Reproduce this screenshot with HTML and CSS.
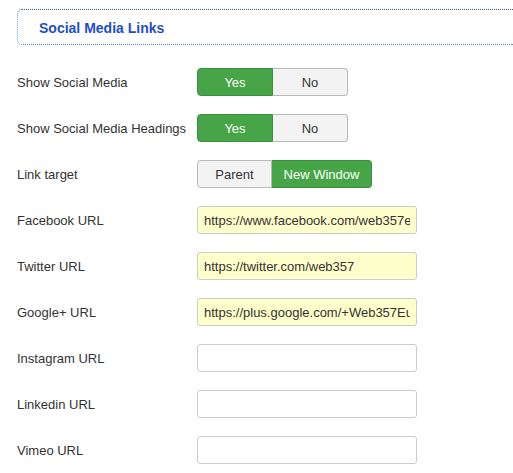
FILE: index.html
```html
<!DOCTYPE html>
<html>
<head>
<meta charset="utf-8">
<link rel="stylesheet" href="styles.css">
</head>
<body>
<div class="page">
  <div class="section-head"><span class="section-title">Social Media Links</span></div>
  <div class="form">
    <div class="row">
      <label class="label">Show Social Media</label>
      <div class="btn-group">
        <span class="btn btn-on">Yes</span><span class="btn">No</span>
      </div>
    </div>
    <div class="row">
      <label class="label">Show Social Media Headings</label>
      <div class="btn-group">
        <span class="btn btn-on">Yes</span><span class="btn">No</span>
      </div>
    </div>
    <div class="row">
      <label class="label">Link target</label>
      <div class="btn-group">
        <span class="btn">Parent</span><span class="btn btn-on btn-wide">New Window</span>
      </div>
    </div>
    <div class="row">
      <label class="label">Facebook URL</label>
      <input class="field filled" type="text" value="https://www.facebook.com/web357eu">
    </div>
    <div class="row">
      <label class="label">Twitter URL</label>
      <input class="field filled" type="text" value="https://twitter.com/web357">
    </div>
    <div class="row">
      <label class="label">Google+ URL</label>
      <input class="field filled" type="text" value="https://plus.google.com/+Web357Eu">
    </div>
    <div class="row">
      <label class="label">Instagram URL</label>
      <input class="field" type="text" value="">
    </div>
    <div class="row">
      <label class="label">Linkedin URL</label>
      <input class="field" type="text" value="">
    </div>
    <div class="row">
      <label class="label">Vimeo URL</label>
      <input class="field" type="text" value="">
    </div>
  </div>
</div>
</body>
</html>
```

FILE: styles.css
```css
html, body {
  margin: 0;
  padding: 0;
  overflow: hidden;
  background: #ffffff;
}
body {
  font-family: "Liberation Sans", Arial, sans-serif;
  font-size: 13px;
  color: #333333;
}
.page {
  padding: 9px 0 0 17px;
}
.section-head {
  box-sizing: border-box;
  height: 36px;
  border: 1px dotted #2a57b0;
  border-right: none;
  border-bottom-color: #5a90e0;
  border-left-color: #6a9ae0;
  border-radius: 5px 0 0 5px;
  display: flex;
  align-items: center;
  padding: 0 0 0 21px;
}
.section-title {
  font-weight: bold;
  font-size: 14px;
  color: #1f4fc3;
  padding-top: 1px;
}
.form {
  display: flex;
  flex-direction: column;
  gap: 18px;
  padding-top: 23px;
}
.row {
  display: flex;
  align-items: center;
  height: 28px;
}
.label {
  width: 180px;
  flex: none;
  color: #333333;
}
.btn-group {
  display: flex;
}
.btn {
  box-sizing: border-box;
  width: 75px;
  height: 28px;
  display: flex;
  align-items: center;
  justify-content: center;
  background: #f3f3f3;
  border: 1px solid #b8b8b8;
  color: #333333;
}
.btn + .btn {
  border-left: none;
}
.btn:first-child {
  border-radius: 4px 0 0 4px;
}
.btn:last-child {
  border-radius: 0 4px 4px 0;
}
.btn-group .btn:first-child.btn-on {
  width: 76px;
}
.btn-on {
  background: #46a546;
  border-color: #3c8f3c;
  color: #ffffff;
}
.btn-wide {
  width: 100px;
}
.field {
  box-sizing: border-box;
  width: 220px;
  height: 28px;
  margin: 0;
  padding: 4px 6px;
  border: 1px solid #cccccc;
  border-radius: 3px;
  background: #ffffff;
  font-family: "Liberation Sans", Arial, sans-serif;
  font-size: 13px;
  color: #333333;
  outline: none;
}
.field.filled {
  background: #ffffcc;
}
```
